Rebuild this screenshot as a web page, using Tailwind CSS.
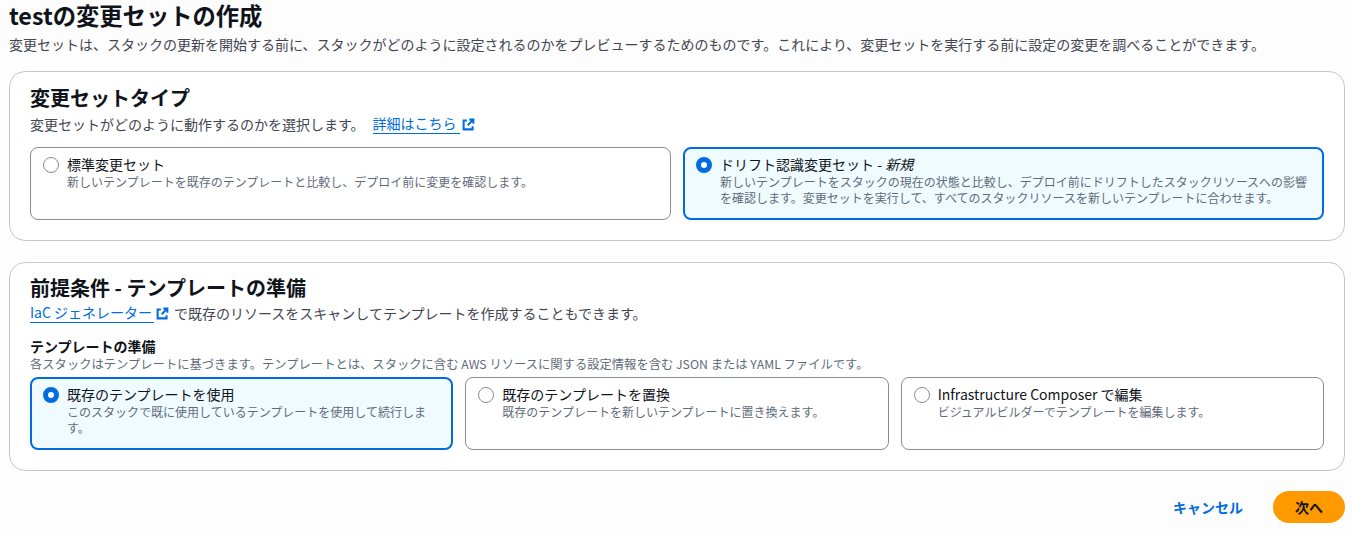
<!DOCTYPE html>
<html lang="ja">
<head>
    <meta charset="UTF-8">
    <title>testの変更セットの作成</title>
    <script src="https://cdn.jsdelivr.net/npm/@tailwindcss/browser@4"></script>
</head>
<body class="bg-[#fdfdfd] text-[#0f141a] font-['Noto_Sans_CJK_JP',sans-serif]">
    <div class="w-[1353px] h-[535px] pl-[9px] pr-[8px] pt-[1px]">
        <h1 class="text-[23.3px] leading-[28px] font-bold">testの変更セットの作成</h1>
        <p class="text-[14px] leading-[20px] text-[#424650] mt-[5px] whitespace-nowrap">変更セットは、スタックの更新を開始する前に、スタックがどのように設定されるのかをプレビューするためのものです。これにより、変更セットを実行する前に設定の変更を調べることができます。</p>

        <section class="mt-[17px] h-[170px] border border-[#c6c6cd] rounded-[16px] bg-white px-5 pt-[14px]">
            <h2 class="text-[20px] leading-[24px] font-bold">変更セットタイプ</h2>
            <p class="text-[14px] leading-[20px] text-[#424650] mt-[4px] flex items-center">
                変更セットがどのように動作するのかを選択します。
                <a class="ml-[8px] pr-[3px] text-[#006ce0] border-b border-[#006ce0] leading-[19px]">詳細はこちら</a>
                <svg class="ml-[2px]" width="13" height="13" viewBox="0 0 16 16" fill="none" stroke="#006ce0" stroke-width="2.5"><path d="M9 2h5v5M14 2L7 9M6 3H2v11h11v-4"/></svg>
            </p>
            <div class="grid grid-cols-2 gap-3 mt-[13px]">
                <div class="h-[73px] border border-[#8c8c94] rounded-[8px] bg-white pl-[12px] pt-[8px] flex gap-[8px]">
                    <span class="mt-[1px] w-4 h-4 rounded-full border border-[#8c8c94] bg-white shrink-0"></span>
                    <div class="-mt-[1px]">
                        <div class="text-[14px] leading-[19px]">標準変更セット</div>
                        <div class="text-[12px] leading-[16px] text-[#5f6b7a]">新しいテンプレートを既存のテンプレートと比較し、デプロイ前に変更を確認します。</div>
                    </div>
                </div>
                <div class="h-[73px] border-2 border-[#006ce0] rounded-[8px] bg-[#f0fbff] pl-[11px] pr-[10px] pt-[7px] flex gap-[8px]">
                    <span class="mt-[1px] w-4 h-4 rounded-full border-[5px] border-[#006ce0] bg-white shrink-0"></span>
                    <div class="-mt-[1px]">
                        <div class="text-[14px] leading-[19px]">ドリフト認識変更セット - <em>新規</em></div>
                        <div class="text-[12px] leading-[16px] text-[#5f6b7a]">新しいテンプレートをスタックの現在の状態と比較し、デプロイ前にドリフトしたスタックリソースへの影響を確認します。変更セットを実行して、すべてのスタックリソースを新しいテンプレートに合わせます。</div>
                    </div>
                </div>
            </div>
        </section>

        <section class="mt-[21px] h-[209px] border border-[#c6c6cd] rounded-[16px] bg-white px-5 pt-[13px]">
            <h2 class="text-[20px] leading-[24px] font-bold">前提条件 - テンプレートの準備</h2>
            <p class="text-[14px] leading-[20px] text-[#424650] mt-[3px] flex items-center">
                <a class="pr-[2px] text-[#006ce0] border-b border-[#006ce0] leading-[19px]">IaC ジェネレーター</a>
                <svg class="ml-[2px] mr-[5px]" width="13" height="13" viewBox="0 0 16 16" fill="none" stroke="#006ce0" stroke-width="2.5"><path d="M9 2h5v5M14 2L7 9M6 3H2v11h11v-4"/></svg>
                で既存のリソースをスキャンしてテンプレートを作成することもできます。
            </p>
            <div class="text-[14px] leading-[16px] font-bold mt-[15px]">テンプレートの準備</div>
            <p class="text-[12.3px] leading-[16px] text-[#5f6b7a] mt-[2px] whitespace-nowrap">各スタックはテンプレートに基づきます。テンプレートとは、スタックに含む AWS リソースに関する設定情報を含む JSON または YAML ファイルです。</p>
            <div class="grid grid-cols-3 gap-3 mt-[5px]">
                <div class="h-[73px] border-2 border-[#006ce0] rounded-[8px] bg-[#f0fbff] pl-[11px] pr-[10px] pt-[7px] flex gap-[8px]">
                    <span class="mt-[1px] w-4 h-4 rounded-full border-[5px] border-[#006ce0] bg-white shrink-0"></span>
                    <div class="-mt-[1px]">
                        <div class="text-[14px] leading-[19px]">既存のテンプレートを使用</div>
                        <div class="text-[12px] leading-[16px] text-[#5f6b7a]">このスタックで既に使用しているテンプレートを使用して続行します。</div>
                    </div>
                </div>
                <div class="h-[73px] border border-[#8c8c94] rounded-[8px] bg-white pl-[12px] pt-[8px] flex gap-[8px]">
                    <span class="mt-[1px] w-4 h-4 rounded-full border border-[#8c8c94] bg-white shrink-0"></span>
                    <div class="-mt-[1px]">
                        <div class="text-[14px] leading-[19px]">既存のテンプレートを置換</div>
                        <div class="text-[12px] leading-[16px] text-[#5f6b7a]">既存のテンプレートを新しいテンプレートに置き換えます。</div>
                    </div>
                </div>
                <div class="h-[73px] border border-[#8c8c94] rounded-[8px] bg-white pl-[12px] pt-[8px] flex gap-[8px]">
                    <span class="mt-[1px] w-4 h-4 rounded-full border border-[#8c8c94] bg-white shrink-0"></span>
                    <div class="-mt-[1px]">
                        <div class="text-[14px] leading-[19px]">Infrastructure Composer で編集</div>
                        <div class="text-[12px] leading-[16px] text-[#5f6b7a]">ビジュアルビルダーでテンプレートを編集します。</div>
                    </div>
                </div>
            </div>
        </section>

        <div class="mt-[20px] flex justify-end items-center">
            <button class="text-[14px] font-bold text-[#006ce0] mr-[30px]">キャンセル</button>
            <button class="w-[72px] h-[32px] rounded-full bg-[#ff9900] text-[14px] font-bold text-[#0f141a]">次へ</button>
        </div>
    </div>
</body>
</html>
